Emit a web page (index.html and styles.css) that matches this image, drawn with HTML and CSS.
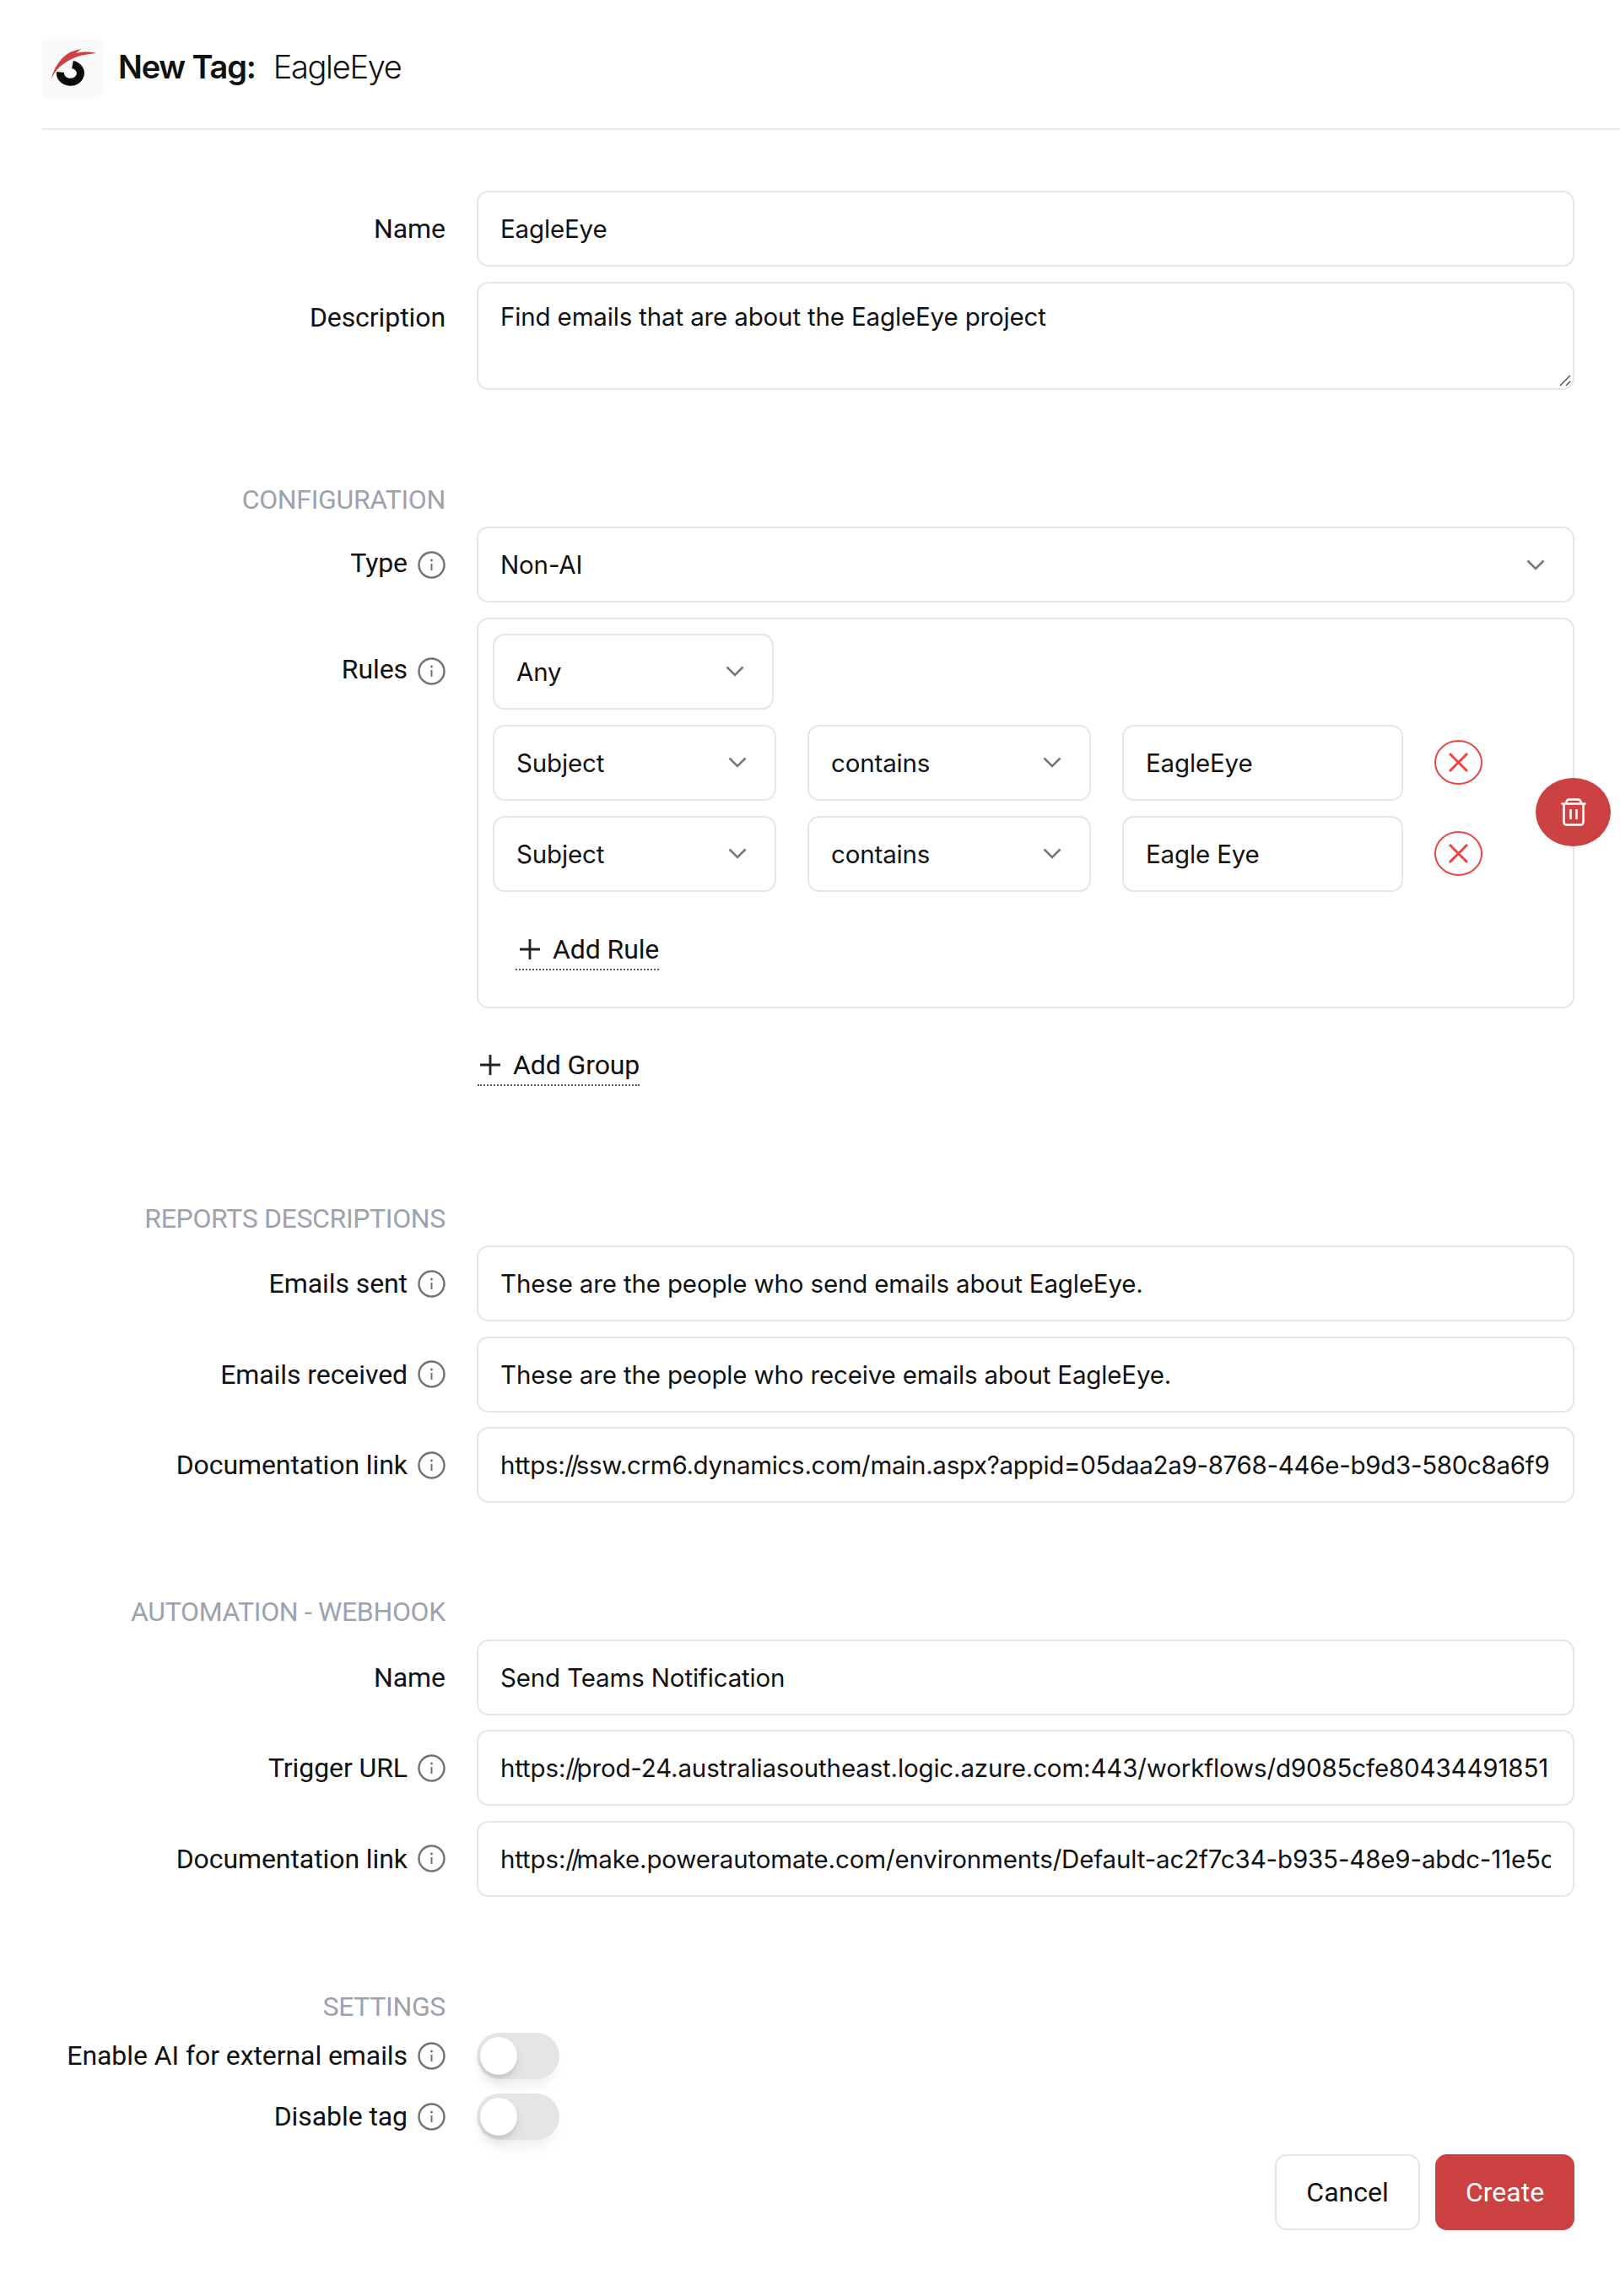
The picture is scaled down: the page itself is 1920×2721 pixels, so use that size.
FILE: index.html
```html
<!DOCTYPE html>
<html lang="en">
<head>
<meta charset="utf-8">
<title>New Tag: EagleEye</title>
<link rel="stylesheet" href="styles.css">
</head>
<body>
<svg class="sprite" width="0" height="0" aria-hidden="true">
  <symbol id="info" viewBox="0 0 33 33"><circle cx="16.5" cy="16.5" r="15" fill="none" stroke="#71717a" stroke-width="2.400"/><circle cx="16.5" cy="11" r="1.400" fill="#71717a"/><path d="M16.500 15v8" stroke="#71717a" stroke-width="2" fill="none"/></symbol>
  <symbol id="chev" viewBox="0 0 22 13"><path d="M1.500 1.500 11 11l9.500-9.500" fill="none" stroke="#777" stroke-width="2.600"/></symbol>
  <symbol id="plus" viewBox="0 0 26 26"><path d="M13 1v24M1 13h24" fill="none" stroke="#222" stroke-width="2.800"/></symbol>
  <symbol id="cross" viewBox="0 0 57 53" preserveAspectRatio="none"><ellipse cx="28.500" cy="26.500" rx="27.500" ry="25.500" fill="none" stroke="#ef4444" stroke-width="2"/><path d="M18 16l21 21M39 16 18 37" fill="none" stroke="#ef4444" stroke-width="3"/></symbol>
</svg>

<header class="head">
  <svg class="logo" viewBox="0 0 72 72" width="72" height="72">
    <rect width="72" height="72" rx="9" fill="#fafafa"/>
    <path d="M36 31.500a12 10.500 0 1 1-14.500 9" fill="none" stroke="#0b0b0b" stroke-width="9"/>
    <path d="M11 48C14 35 22 23 33 17 37 15 42 14 46 13L40 18C48 16 57 16 64 18 56 19 50 20 45 21 36 24 27 28 18 37 15 41 13 44 11 48Z" fill="#cc4141"/>
  </svg>
  <h1 class="title"><strong>New Tag:</strong> <span>EagleEye</span></h1>
</header>

<main class="form">
  <section class="group first">
    <div class="row"><div class="label">Name</div><div class="field">EagleEye</div></div>
    <div class="row"><div class="label desc">Description</div>
      <div class="field area">Find emails that are about the EagleEye project
        <svg class="grip" viewBox="0 0 14 14" width="14" height="14"><path d="M1 13 13 1M8 13l5-5" stroke="#555" stroke-width="1.500" fill="none"/></svg>
      </div>
    </div>
  </section>

  <section class="group">
    <div class="row head-row"><div class="label section">CONFIGURATION</div></div>
    <div class="row"><div class="label"><span class="up">Type</span><svg class="i"><use href="#info"/></svg></div>
      <div class="field select">Non-AI<svg class="chev"><use href="#chev"/></svg></div></div>
    <div class="row"><div class="label top"><span class="up">Rules</span><svg class="i"><use href="#info"/></svg></div>
      <div class="col">
        <div class="rules">
          <div class="field select any">Any<svg class="chev"><use href="#chev"/></svg></div>
          <div class="rule">
            <div class="field select cell">Subject<svg class="chev"><use href="#chev"/></svg></div>
            <div class="field select cell">contains<svg class="chev"><use href="#chev"/></svg></div>
            <div class="field cell value">EagleEye</div>
            <svg class="cross"><use href="#cross"/></svg>
          </div>
          <div class="rule">
            <div class="field select cell">Subject<svg class="chev"><use href="#chev"/></svg></div>
            <div class="field select cell">contains<svg class="chev"><use href="#chev"/></svg></div>
            <div class="field cell value">Eagle Eye</div>
            <svg class="cross"><use href="#cross"/></svg>
          </div>
          <div class="add add-rule"><svg class="plus"><use href="#plus"/></svg>Add Rule</div>
          <div class="trash">
            <svg viewBox="0 0 30 33" width="30" height="33"><path d="M.5 6.500h29M6.500 6.500V4.500a3 3 0 0 1 3-3h11a3 3 0 0 1 3 3v2M3.500 6.500v22a3 3 0 0 0 3 3h17a3 3 0 0 0 3-3v-22M11.500 13v12M18.500 13v12" fill="none" stroke="#fff" stroke-width="2.500"/></svg>
          </div>
        </div>
        <div class="add add-group"><svg class="plus"><use href="#plus"/></svg>Add Group</div>
      </div>
    </div>
  </section>

  <section class="group reports">
    <div class="row head-row"><div class="label section">REPORTS DESCRIPTIONS</div></div>
    <div class="row"><div class="label">Emails sent<svg class="i"><use href="#info"/></svg></div><div class="field">These are the people who send emails about EagleEye.</div></div>
    <div class="row"><div class="label">Emails received<svg class="i"><use href="#info"/></svg></div><div class="field">These are the people who receive emails about EagleEye.</div></div>
    <div class="row"><div class="label">Documentation link<svg class="i"><use href="#info"/></svg></div><div class="field"><span class="clip tight">https:<span class="slashes">//</span>ssw.crm6.dynamics.com/main.aspx?appid=05daa2a9-8768-446e-b9d3-580c8a6f9</span></div></div>
  </section>

  <section class="group webhook">
    <div class="row head-row"><div class="label section">AUTOMATION - WEBHOOK</div></div>
    <div class="row"><div class="label">Name</div><div class="field">Send Teams Notification</div></div>
    <div class="row"><div class="label">Trigger URL<svg class="i"><use href="#info"/></svg></div><div class="field"><span class="clip">https:<span class="slashes">//</span>prod-24.australiasoutheast.logic.azure.com:443/workflows/d9085cfe80434491851</span></div></div>
    <div class="row"><div class="label">Documentation link<svg class="i"><use href="#info"/></svg></div><div class="field"><span class="clip">https:<span class="slashes">//</span>make.powerautomate.com/environments/Default-ac2f7c34-b935-48e9-abdc-11e5c</span></div></div>
  </section>

  <section class="group settings">
    <div class="row head-row"><div class="label section">SETTINGS</div></div>
    <div class="row toggle-row"><div class="label">Enable AI for external emails<svg class="i"><use href="#info"/></svg></div><div class="toggle"><div class="knob"></div></div></div>
    <div class="row toggle-row"><div class="label">Disable tag<svg class="i"><use href="#info"/></svg></div><div class="toggle"><div class="knob"></div></div></div>
  </section>

  <div class="actions">
    <div class="btn">Cancel</div>
    <div class="btn primary">Create</div>
  </div>
</main>
</body>
</html>
```
FILE: styles.css
```css
* { box-sizing: border-box; }
html, body { margin: 0; padding: 0; background: #fff; }
body {
  font-family: Roboto, "Liberation Sans", sans-serif;
  font-size: 32px;
  color: #111;
  height: 2721px;
  overflow: hidden;
}
.sprite { position: absolute; }

.head {
  margin-left: 49px;
  padding-top: 45px;
  height: 154px;
  border-bottom: 2px solid #eaeaea;
  display: flex;
  align-items: flex-start;
  gap: 18px;
}
.logo { flex: none; margin-left: 1px; }
.title {
  margin: 15px 0 0;
  font-family: Inter, Roboto, sans-serif;
  font-size: 38px;
  line-height: 38px;
  font-weight: 300;
  letter-spacing: -1.300px;
  display: flex;
  gap: 21px;
}
.title strong { font-weight: 600; letter-spacing: -1.200px; }

.form { padding: 72px 54px 0 0; }
.group { margin-top: 112px; display: flex; flex-direction: column; gap: 17.500px; }
.group.first { margin-top: 0; }
.group.reports { margin-top: 139px; }
.group.webhook { margin-top: 111px; }
.group.settings { margin-top: 112px; }

.row { display: flex; gap: 37px; align-items: flex-start; }
.row.head-row { height: 36px; margin-bottom: -3px; }
.label {
  flex: none;
  width: 528px;
  height: 90px;
  display: flex;
  align-items: center;
  justify-content: flex-end;
  gap: 12px;
  line-height: 36px;
  letter-spacing: -0.080px;
}
.label.desc { height: 85px; }
.label.top { height: 89px; margin-top: 19px; }
.label.section { height: 36px; color: #9ca3af; letter-spacing: -0.350px; }
.up { margin-bottom: 5px; }
.i { width: 33px; height: 33px; flex: none; }

.field {
  flex: 1;
  min-width: 0;
  height: 90px;
  border: 2px solid #e6e6e6;
  border-radius: 14px;
  padding: 0 26px;
  display: flex;
  align-items: center;
  justify-content: space-between;
  white-space: nowrap;
  background: #fff;
  font-family: Inter, Roboto, sans-serif;
  font-size: 29.500px;
  letter-spacing: -0.150px;
}
.clip { display: block; overflow: hidden; width: 100%; }
.clip.tight { letter-spacing: -0.300px; }
.slashes { letter-spacing: -4px; }
.field.area {
  height: 128px;
  align-items: flex-start;
  padding-top: 21px;
  position: relative;
  line-height: 36px;
}
.grip { position: absolute; right: 2px; bottom: 2px; }
.select { padding-right: 33px; }
.chev { width: 22px; height: 13px; flex: none; }

.col { flex: 1; min-width: 0; display: flex; flex-direction: column; }
.rules {
  position: relative;
  height: 463px;
  border: 2px solid #e6e6e6;
  border-radius: 14px;
  padding: 17px 17px 0;
  display: flex;
  flex-direction: column;
  gap: 18px;
}
.field.any { flex: none; width: 333px; }
.rule { display: flex; align-items: center; gap: 37px; }
.field.cell { flex: none; width: 336px; }
.field.cell.value { width: 333px; }
.cross { width: 57px; height: 53px; flex: none; }
.add {
  display: flex;
  align-items: center;
  gap: 14px;
  width: max-content;
  height: 47px;
  line-height: 36px;
  border-bottom: 2px dotted #555;
}
.plus { width: 26px; height: 26px; }
.add-rule { margin: 28px 0 0 27px; padding-left: 4px; letter-spacing: -0.100px; }
.add-group { margin: 45px 0 0 1px; padding-left: 2px; letter-spacing: -0.100px; }
.trash {
  position: absolute;
  top: 188px;
  right: -45px;
  width: 89px;
  height: 81px;
  border-radius: 50%;
  background: #cc4141;
  display: flex;
  align-items: center;
  justify-content: center;
}

.row.toggle-row { height: 55px; }
.toggle-row .label { height: 55px; }
.settings { gap: 17px; }
.settings .head-row { margin-bottom: -4px; }
.toggle {
  width: 98px;
  height: 55px;
  border-radius: 28px;
  background: #e5e5e5;
  padding: 5px 4px;
  box-shadow: 0 14px 20px -8px rgba(0, 0, 0, .08);
}
.knob {
  width: 44px;
  height: 45px;
  border-radius: 50%;
  background: #fff;
  box-shadow: 0 4px 5px -1px rgba(0, 0, 0, .12), 0 8px 14px rgba(0, 0, 0, .06);
}

.actions {
  display: flex;
  justify-content: flex-end;
  gap: 18px;
  margin-top: 17px;
}
.btn {
  width: 172px;
  height: 90px;
  border: 2px solid #e6e6e6;
  border-radius: 14px;
  display: flex;
  align-items: center;
  justify-content: center;
  background: #fff;
}
.btn.primary { width: 165px; border-color: #cc4141; background: #cc4141; color: #fff; }
```
